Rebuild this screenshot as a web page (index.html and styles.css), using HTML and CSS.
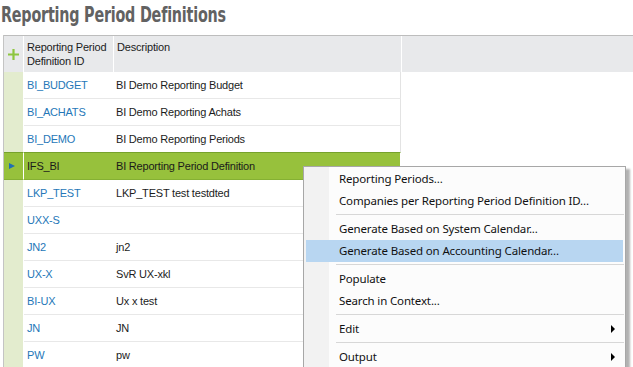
FILE: index.html
```html
<!DOCTYPE html>
<html lang="en">
<head>
    <meta charset="UTF-8">
    <title>Reporting Period Definitions</title>
    <link rel="stylesheet" href="styles.css">
</head>
<body>
    <h1 class="page-title"><span>Reporting Period Definitions</span></h1>

    <div class="grid">
        <div class="grid-head">
            <div class="lead">
                <svg width="11" height="11" viewBox="0 0 11 11"><path d="M5.5 0v11M0 5.5h11" stroke="#8dc63f" stroke-width="2.2"/></svg>
            </div>
            <div class="col-id">Reporting Period<br>Definition ID</div>
            <div class="col-desc">Description</div>
            <div class="col-fill"></div>
        </div>

        <div class="row"><div class="lead"></div><div class="col-id">BI_BUDGET</div><div class="col-desc">BI Demo Reporting Budget</div><div class="col-fill"></div></div>
        <div class="row"><div class="lead"></div><div class="col-id">BI_ACHATS</div><div class="col-desc">BI Demo Reporting Achats</div><div class="col-fill"></div></div>
        <div class="row"><div class="lead"></div><div class="col-id">BI_DEMO</div><div class="col-desc">BI Demo Reporting Periods</div><div class="col-fill"></div></div>
        <div class="row selected"><div class="lead"><span class="marker"></span></div><div class="col-id">IFS_BI</div><div class="col-desc">BI Reporting Period Definition</div><div class="col-fill"></div></div>
        <div class="row"><div class="lead"></div><div class="col-id">LKP_TEST</div><div class="col-desc">LKP_TEST test testdted</div><div class="col-fill"></div></div>
        <div class="row"><div class="lead"></div><div class="col-id">UXX-S</div><div class="col-desc"></div><div class="col-fill"></div></div>
        <div class="row"><div class="lead"></div><div class="col-id">JN2</div><div class="col-desc">jn2</div><div class="col-fill"></div></div>
        <div class="row"><div class="lead"></div><div class="col-id">UX-X</div><div class="col-desc">SvR UX-xkl</div><div class="col-fill"></div></div>
        <div class="row"><div class="lead"></div><div class="col-id">BI-UX</div><div class="col-desc">Ux x test</div><div class="col-fill"></div></div>
        <div class="row"><div class="lead"></div><div class="col-id">JN</div><div class="col-desc">JN</div><div class="col-fill"></div></div>
        <div class="row"><div class="lead"></div><div class="col-id">PW</div><div class="col-desc">pw</div><div class="col-fill"></div></div>
    </div>

    <!-- context menu opened on the selected row -->
    <div class="ctx-menu">
        <div class="item">Reporting Periods...</div>
        <div class="item">Companies per Reporting Period Definition ID...</div>
        <div class="sep"></div>
        <div class="item">Generate Based on System Calendar...</div>
        <div class="item hover">Generate Based on Accounting Calendar...</div>
        <div class="sep"></div>
        <div class="item">Populate</div>
        <div class="item">Search in Context...</div>
        <div class="sep"></div>
        <div class="item sub">Edit</div>
        <div class="sep"></div>
        <div class="item sub">Output</div>
    </div>
</body>
</html>
```

FILE: styles.css
```css
body {
    margin: 0;
    background: #fff;
    font-family: "Liberation Sans", Arial, sans-serif;
    overflow: hidden;
}
.page-title {
    margin: 0;
    padding: 2px 0 0 1px;
    height: 32px;
    box-sizing: border-box;
    font-family: "DejaVu Sans Condensed", "DejaVu Sans", sans-serif;
    font-size: 22px;
    font-weight: bold;
    letter-spacing: -0.3px;
    color: #626262;
    white-space: nowrap;
}
/* the original title face is a very narrow grotesque */
.page-title span {
    display: inline-block;
    transform: scaleX(0.725);
    transform-origin: left center;
}
.grid {
    margin: 3px 0 0 3px;
    border-left: 1px solid #c4c4c4;
    font-size: 11px;
    letter-spacing: -0.2px;
    color: #1c1c1c;
}
.grid-head {
    display: flex;
    height: 36px;
    border-top: 1px solid #bdbdbd;
    background: #e8e9eb;
    line-height: 14px;
}
.grid-head > div {
    border-right: 1px solid #fff;
    padding-top: 4px;
}
.grid-head .lead {
    display: flex;
    align-items: center;
    justify-content: center;
    padding-top: 0;
}
.lead {
    width: 19px;
    flex: none;
}
.col-id {
    width: 86px;
    padding-left: 3px;
    flex: none;
}
.col-desc {
    width: 284px;
    padding-left: 3px;
    flex: none;
}
.col-fill {
    flex: 1;
    border-right: none !important;
}
.row {
    display: flex;
    height: 27px;
    line-height: 26px;
}
.row .lead {
    background: #e3ecce;
    border-right: 1px solid #fff;
}
.row .col-id,
.row .col-desc {
    border-bottom: 1px solid #e8e8e8;
}
.row .col-id {
    color: #2577b8;
}
.row .col-desc {
    border-right: 1px solid #e3e3e3;
}
.row.selected {
    margin-top: -1px;
    height: 28px;
}
.row.selected .lead,
.row.selected .col-id,
.row.selected .col-desc {
    background: #97c13c;
    color: #1a1a1a;
    border-top: 1px solid #76a22c;
    border-bottom: 1px solid #85b033;
}
.row.selected .col-desc {
    border-right-color: #fff;
}
.marker {
    display: block;
    width: 0;
    height: 0;
    margin: 10px 0 0 5px;
    border-left: 6px solid #1f6fb5;
    border-top: 3.5px solid transparent;
    border-bottom: 3.5px solid transparent;
}

.ctx-menu {
    position: absolute;
    left: 303px;
    top: 166px;
    width: 321px;
    padding: 1px 0;
    border: 1px solid #a7a7a7;
    background: linear-gradient(to right, #f2f2f2 25px, #fcfcfc 25px);
    box-shadow: 4px 3px 2px rgba(0, 0, 0, 0.3);
    font-family: "Noto Sans", "Open Sans", sans-serif;
    font-size: 11.5px;
    letter-spacing: -0.15px;
    color: #111;
}
.item {
    position: relative;
    height: 22px;
    line-height: 22px;
    margin: 0 2px;
    padding-left: 33px;
    white-space: nowrap;
}
.item.hover {
    background: #b8d6f1;
}
.item.sub::after {
    content: "";
    position: absolute;
    right: 8px;
    top: 7px;
    border-left: 4px solid #000;
    border-top: 4px solid transparent;
    border-bottom: 4px solid transparent;
}
.sep {
    height: 1px;
    margin: 2px 1px 3px 32px;
    background: #d7d7d7;
}
```
